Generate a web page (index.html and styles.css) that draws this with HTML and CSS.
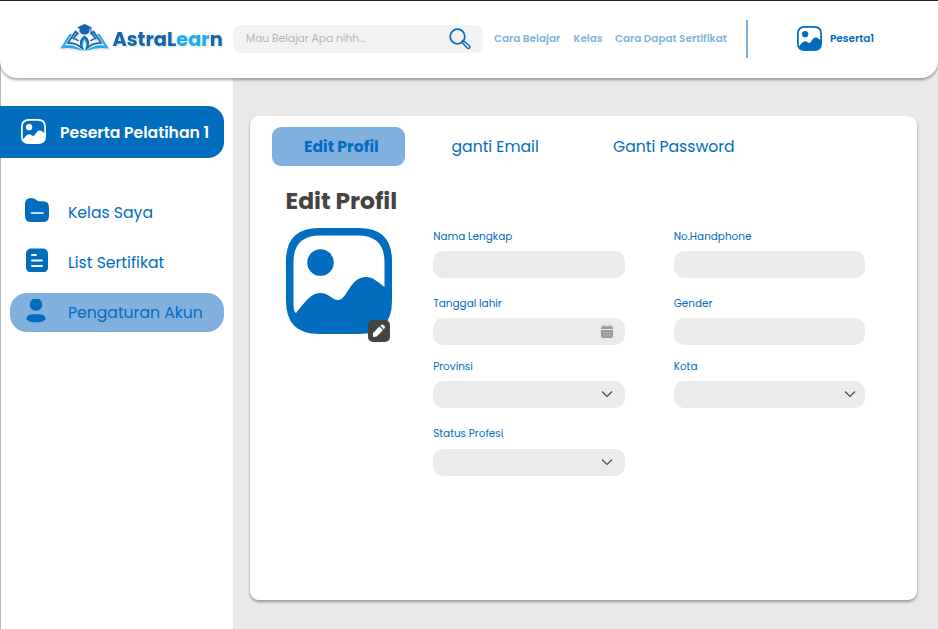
FILE: index.html
```html
<!DOCTYPE html>
<html lang="id">
<head>
<meta charset="utf-8">
<title>AstraLearn - Edit Profil</title>
<link rel="stylesheet" href="styles.css">
</head>
<body>
<svg class="defs" aria-hidden="true">
  <symbol id="picture" viewBox="0 0 106 106">
    <path fill="currentColor" fill-rule="evenodd" d="M33 0H73Q106 0 106 33V73Q106 106 73 106H33Q0 106 0 73V33Q0 0 33 0ZM34 7.500Q7.500 7.500 7.500 34V78Q8 84 10 85C17 77 24 65 34 65C43 65 46 72 52 72C61 72 64 49 80 49C87 49 92 54 98.500 59V34Q98.500 7.500 72 7.500Z"/>
    <circle cx="34.500" cy="34.500" r="13.300" fill="currentColor"/>
  </symbol>
  <symbol id="chevron" viewBox="0 0 12 8"><path d="M1 1.500L6 6.500L11 1.500" fill="none" stroke="currentColor" stroke-width="1.100"/></symbol>
</svg>
<header class="topbar">
  <a class="brand">
    <svg class="brand-mark" viewBox="0 0 49 28">
      <path fill="#20adf0" d="M9.500 10H12L4.500 21.500Q15 20 23 27Q12 22.500 .3 24.500ZM39.500 10H37L44.500 21.500Q34 20 26 27Q37 22.500 48.700 24.500Z"/>
      <path fill="none" stroke="#1265ae" stroke-width="1.700" d="M18.500 10L15.500 7.500 8 18.800Q17 18.500 23.500 25.500M18.500 17Q16.500 15 13.500 14.500L17.500 9M30.500 10L33.500 7.500 41 18.800Q32 18.500 25.500 25.500M30.500 17Q32.500 15 35.500 14.500L31.500 9"/>
      <path fill="#1265ae" d="M17 3.500L24.500 0 32 3.500 29.500 4.800V7.500Q28 10.500 24.500 10.500Q21 10.500 19.500 7.500V4.800Z"/>
      <path fill="#1265ae" d="M24.500 11.500Q18 16 20.500 22L24.500 27 28.500 22Q31 16 24.500 11.500Z"/>
      <path fill="#20adf0" d="M24.500 14Q20 19 23 24L24.500 27 26 24Q29 19 24.500 14Z"/>
      <path fill="#fff" d="M24.500 16Q21.500 20 24.500 27Q27.500 20 24.500 16Z"/>
      <path fill="none" stroke="#1265ae" d="M31 4V9"/>
    </svg>
    <span class="brand-name">Astra<span>L</span><span class="sky">ear</span>n</span>
  </a>
  <div class="search">
    <span class="search-text">Mau Belajar Apa nihh...</span>
    <svg class="search-icon" viewBox="0 0 22 22" fill="none" stroke="currentColor"><circle cx="8.500" cy="8.500" r="7.300" stroke-width="1.700"/><path stroke-width="1.500" d="M12.500 14L14 12.500 20.500 18Q21.200 19 20.500 20Q19.500 21 18.500 20.200L12.500 14"/></svg>
  </div>
  <nav class="links"><a class="l-belajar">Cara Belajar</a><a class="l-kelas">Kelas</a><a class="l-sertifikat">Cara Dapat Sertifikat</a></nav>
  <div class="account"><svg><use href="#picture"/></svg><span>Peserta1</span></div>
</header>
<div class="page">
  <aside class="sidebar">
    <div class="user"><svg><use href="#picture"/></svg><span>Peserta Pelatihan 1</span></div>
    <nav class="menu">
      <a><svg viewBox="0 0 24 24"><path fill="currentColor" d="M0 6Q0 0 6 0Q9.500 0 11 1.700Q12.500 3.300 15 3.300H18Q24 3.300 24 9.500V18Q24 24 18 24H6Q0 24 0 18Z"/><path stroke="#fff" stroke-width="1.700" stroke-linecap="round" d="M6.500 15H18"/></svg><span class="m-kelas">Kelas Saya</span></a>
      <a><svg viewBox="0 0 24 24"><rect x="1" y=".5" width="22" height="24" rx="5" fill="currentColor"/><path stroke="#fff" stroke-width="1.800" stroke-linecap="round" d="M7 7H11M7 12.500H17M7 18H17"/></svg><span class="m-list">List Sertifikat</span></a>
      <a class="current"><svg viewBox="0 0 24 24"><circle cx="11" cy="5.500" r="6.300" fill="currentColor"/><rect x="1.500" y="15.200" width="19" height="8" rx="6.500" ry="4" fill="currentColor"/></svg><span class="m-akun">Pengaturan Akun</span></a>
    </nav>
  </aside>
  <main class="content">
    <section class="card">
      <nav class="tabs"><a class="active">Edit Profil</a><a class="t-email">ganti Email</a><a class="t-pass">Ganti Password</a></nav>
      <h1><span>Edit Profil</span></h1>
      <div class="profile">
        <div class="photo">
          <svg class="photo-image"><use href="#picture"/></svg>
          <button class="edit" aria-label="Edit foto"><svg viewBox="0 0 14 14"><path fill="#fff" d="M1 9L7.500 2.500 11 6 4.800 12.600 1 13ZM8.300 1.800L9.500.8Q10.500.2 11.500 1L12.700 2.200Q13.300 3 12.700 4L11.800 5.200Z"/></svg></button>
        </div>
        <form class="fields">
          <label><span class="f-nama">Nama Lengkap</span><div class="input"></div></label>
          <label><span class="f-hp">No.Handphone</span><div class="input"></div></label>
          <label><span class="f-lahir">Tanggal lahir</span><div class="input"><svg class="calendar" viewBox="0 0 12 13"><path fill="#999" d="M0 5H12V10.500Q12 13 9.500 13H2.500Q0 13 0 10.500Z"/><path fill="#999" d="M0 4V3.500Q0 1.300 2.500 1.300H9.500Q12 1.300 12 3.500V4Z"/><path stroke="#999" stroke-width="1.200" d="M3 0V2M9 0V2"/><path stroke="#c8c8c8" stroke-dasharray="1.300 1.500" d="M2.500 7.500H10M2.500 10H10"/></svg></div></label>
          <label><span class="f-gender">Gender</span><div class="input"></div></label>
          <label><span class="f-prov">Provinsi</span><div class="input"><svg class="chevron"><use href="#chevron"/></svg></div></label>
          <label><span class="f-kota">Kota</span><div class="input near"><svg class="chevron"><use href="#chevron"/></svg></div></label>
          <label><span class="f-status">Status Profesi</span><div class="input low"><svg class="chevron"><use href="#chevron"/></svg></div></label>
        </form>
      </div>
    </section>
  </main>
</div>
</body>
</html>
```
FILE: styles.css
```css
* { box-sizing: border-box; }
body { margin: 0; height: 629px; overflow: hidden; font-family: Poppins, Inter, sans-serif; color: #006dbf; background: #fff; }
a, span { white-space: nowrap; }
svg { display: block; flex: none; }
.defs { position: absolute; width: 0; height: 0; }

.topbar { position: relative; z-index: 1; display: flex; align-items: center; height: 78px; padding: 0 0 2px 60px; background: #fff; border-top: 1px solid #231f20; border-radius: 0 0 17px 17px; box-shadow: 0 2px 3px rgba(0,0,0,.35); }
.brand { display: flex; align-items: center; width: 173px; height: 28px; gap: 3.500px; filter: drop-shadow(1px 1px 1px rgba(0,0,0,.15)); }
.brand-mark { width: 49px; height: 28px; margin-bottom: 2px; }
.brand-name { font-size: 19.400px; font-weight: 700; line-height: 28px; padding-top: 3px; color: #1265ae; }
.sky { color: #20adf0; }
.search { display: flex; align-items: center; justify-content: space-between; width: 250px; height: 28px; padding: 0 12px 0 13px; border-radius: 8px; background: #f2f2f2; }
.search-text { padding-top: 1px; font-size: 10.650px; color: #b5b5b5; }
.search-icon { width: 22px; height: 22px; }
.links { display: flex; align-items: center; height: 38px; width: 265px; padding-left: 11px; border-right: 2px solid #80b0de; font-size: 10.450px; font-weight: 600; color: #80b4de; }
.l-belajar { width: 79.500px; }
.l-kelas { width: 41.500px; }
.account { display: flex; align-items: center; gap: 8px; padding-left: 49px; font-size: 10.450px; font-weight: 600; }
.account svg { width: 25px; height: 25px; }
.account span { padding-top: 1px; }

.page { display: flex; height: 571px; margin-top: -20px; }
.sidebar { width: 233px; padding-top: 48px; border-left: 1px solid #b8b8b8; }
.user { display: flex; align-items: center; gap: 14px; width: 224px; height: 51.500px; margin-left: -1px; padding-left: 21px; border-radius: 0 16px 16px 0; background: #006dbf; color: #fff; font-size: 15.650px; font-weight: 600; }
.user svg { width: 25px; height: 25px; }
.user span { padding-top: 1px; }
.menu { display: flex; flex-direction: column; gap: 11.500px; padding: 34.700px 0 0 9px; font-size: 15.650px; }
.menu a { display: flex; align-items: center; gap: 19px; width: 214px; height: 39px; padding-left: 15px; border-radius: 17px; }
.menu svg { width: 24px; height: 24px; margin-bottom: 4px; }
.menu span { padding-top: 1px; }
.menu .m-akun { padding-top: 0; }
.menu .current { background: #80b0de; }

.content { flex: 1; padding: 58px 21px 0 17px; background: #e9e9e9; }
.card { height: 484px; padding: 11px 22px; border-radius: 9px; background: #fff; box-shadow: 0 2px 3px rgba(0,0,0,.35); }
.tabs { display: flex; align-items: center; height: 39px; font-size: 15.650px; }
.active { width: 133px; height: 39px; padding-left: 32px; border-radius: 9px; background: #80b0de; font-weight: 700; line-height: 39px; }
.t-email { width: 161.500px; margin-left: 46.500px; }
h1 { margin: 19px 0 0 13.500px; font-size: 23.400px; line-height: 31px; color: #444; }
.profile { display: flex; margin: 12px 0 0 13.500px; }
.photo { position: relative; width: 106px; height: 106px; }
.photo-image { width: 106px; height: 106px; }
.edit { position: absolute; left: 82px; top: 92px; width: 22px; height: 22px; padding: 4px; border: 0; border-radius: 5px; background: #444; }
.edit svg { width: 14px; height: 14px; }
.fields { display: grid; grid-template-columns: 191.500px 191.500px; grid-template-rows: 67px 63px 67px 52px; column-gap: 49px; margin-left: 41.700px; font-size: 10.430px; }
.fields span { display: block; height: 16px; margin-bottom: 7px; line-height: 18px; }
.input { display: flex; align-items: center; justify-content: flex-end; height: 26.500px; padding-right: 11.700px; border-radius: 10px; background: #ebebeb; }
.near { padding-right: 9.300px; }
.low { margin-top: 8px; }
.calendar { width: 12px; height: 13px; }
.chevron { width: 12px; height: 8px; color: #444; }
```
